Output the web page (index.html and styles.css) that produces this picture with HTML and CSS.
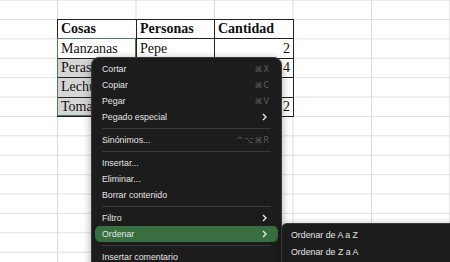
FILE: index.html
```html
<!doctype html>
<html>
<head>
    <meta charset="utf-8"/>
    <title>hoja</title>
    <link rel="stylesheet" href="styles.css">
</head>
<body>

<div id="sheet">
    <table id="data">
        <colgroup><col class="ca"><col class="cb"><col class="cc"></colgroup>
        <tr class="head"><td>Cosas</td><td>Personas</td><td>Cantidad</td></tr>
        <tr><td>Manzanas</td><td>Pepe</td><td class="num">2</td></tr>
        <tr><td class="sel">Peras</td><td></td><td class="num">4</td></tr>
        <tr><td class="sel">Lechu</td><td></td><td class="num"></td></tr>
        <tr><td class="sel">Toma</td><td></td><td class="num">2</td></tr>
    </table>
    <div id="selection"></div>

    <div id="menu" class="menu">
        <div class="item">Cortar<span class="key">⌘X</span></div>
        <div class="item">Copiar<span class="key">⌘C</span></div>
        <div class="item">Pegar<span class="key">⌘V</span></div>
        <div class="item">Pegado especial<svg class="chev" viewBox="0 0 5 8"><path d="M1 1l3 3-3 3"/></svg></div>
        <div class="sep"></div>
        <div class="item">Sinónimos...<span class="key">^⌥⌘R</span></div>
        <div class="sep"></div>
        <div class="item">Insertar...</div>
        <div class="item">Eliminar...</div>
        <div class="item">Borrar contenido</div>
        <div class="sep"></div>
        <div class="item">Filtro<svg class="chev" viewBox="0 0 5 8"><path d="M1 1l3 3-3 3"/></svg></div>
        <div class="item active">Ordenar<svg class="chev" viewBox="0 0 5 8"><path d="M1 1l3 3-3 3"/></svg></div>
        <div class="sep"></div>
        <div class="item">Insertar comentario</div>
    </div>

    <div id="submenu" class="menu">
        <div class="item">Ordenar de A a Z</div>
        <div class="item">Ordenar de Z a A</div>
    </div>
</div>

</body>
</html>
```

FILE: styles.css
```css
body {
    margin: 0;
    background: #fff;
}
#sheet {
    position: relative;
    width: 450px;
    height: 262px;
    overflow: hidden;
    padding: 19px 0 0 57px;
    box-sizing: border-box;
    background-image:
        linear-gradient(to right, #dadada 1px, transparent 1px),
        linear-gradient(to bottom, #e0e0e0 1px, transparent 1px);
    background-size: 78.5px 100%, 100% 19.4px;
    background-position: 57px 0, 0 19px;
}
#data {
    border-collapse: collapse;
    border: 1.5px solid #111;
    font-family: "Liberation Serif", serif;
    font-size: 14px;
    color: #111;
    background: #fff;
}
.ca { width: 79px; }
.cb { width: 78px; }
.cc { width: 79px; }
#data td {
    border: 1px solid #222;
    height: 18.4px;
    padding: 0 3px;
    line-height: 18px;
    white-space: nowrap;
    overflow: hidden;
    max-width: 72px;
}
#data .head td {
    font-weight: bold;
}
#data td.num {
    text-align: right;
}
#data td.sel {
    background: #d5d5d5;
}
#selection {
    position: absolute;
    left: 57px;
    top: 38px;
    width: 79px;
    height: 78px;
    border: 1px solid #4f7d5a;
    box-sizing: border-box;
}

.menu {
    position: absolute;
    background: #1c1c1c;
    border: 1px solid #3a3a3a;
    border-radius: 8px;
    box-shadow: 0 2px 8px rgba(0, 0, 0, .35);
    font-family: "Liberation Sans", Arial, sans-serif;
    font-size: 8.8px;
    color: #e4e4e4;
    padding: 3px 0;
}
#menu {
    left: 91px;
    top: 57px;
    width: 191px;
    height: 230px;
    box-sizing: border-box;
}
#submenu {
    left: 281px;
    top: 223px;
    width: 190px;
    height: 60px;
    border-radius: 6px;
}
.item {
    display: flex;
    align-items: center;
    height: 16px;
    margin: 0 3px;
    padding: 0 7px;
    border-radius: 5px;
}
#submenu .item {
    padding: 0 6px;
    height: 16.5px;
}
.item.active {
    background: #386e40;
}
.key {
    margin-left: auto;
    margin-right: 1px;
    color: #5e5e5e;
    font-family: "DejaVu Sans", sans-serif;
    font-size: 8px;
    letter-spacing: 1px;
}
.chev {
    margin-left: auto;
    margin-right: 4px;
    width: 5px;
    height: 8px;
    fill: none;
    stroke: #e8e8e8;
    stroke-width: 1.4;
}
.sep {
    height: 1px;
    background: #3a3a3a;
    margin: 3px 10px 3px 10px;
}
```
